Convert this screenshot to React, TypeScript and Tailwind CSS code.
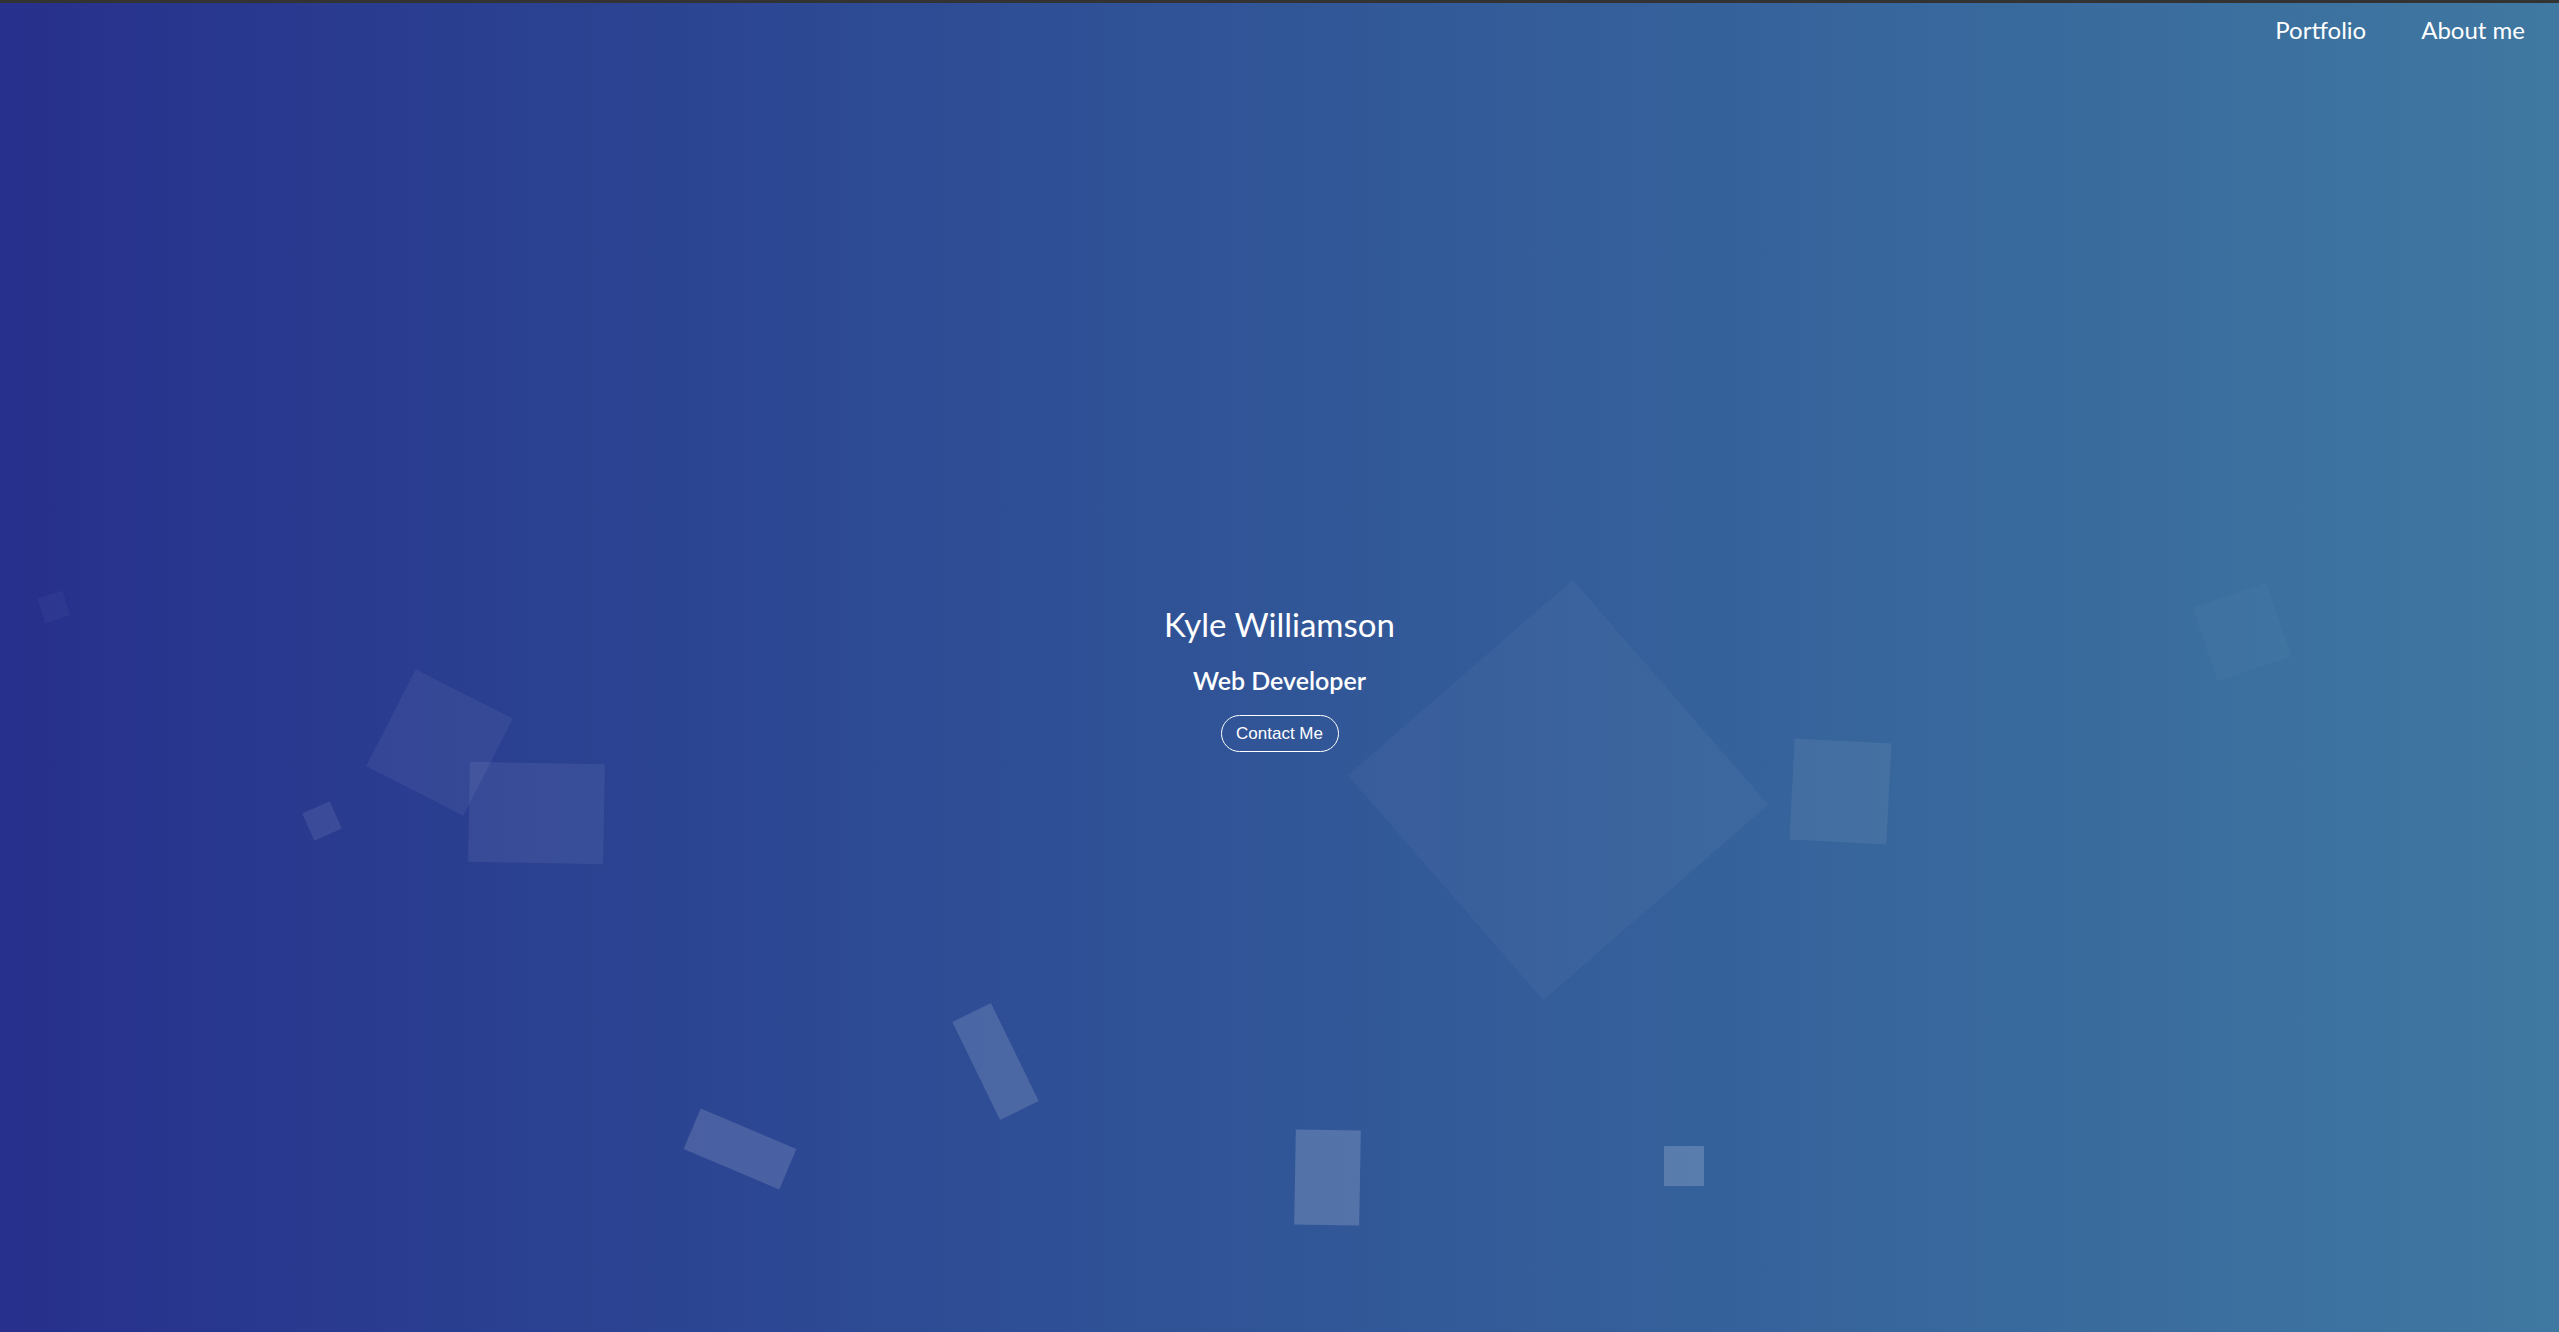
import React from "react";

type Shape = {
  x: number;
  y: number;
  w: number;
  h: number;
  rot: number;
  op: number;
};

// centre, size, rotation and opacity of the floating squares
const shapes: Shape[] = [
  { x: 1558, y: 790, w: 298, h: 298, rot: -41, op: 0.035 },
  { x: 439, y: 742, w: 109, h: 109, rot: 27, op: 0.055 },
  { x: 536, y: 813, w: 135, h: 100, rot: 1, op: 0.065 },
  { x: 322, y: 821, w: 30, h: 30, rot: -24, op: 0.09 },
  { x: 54, y: 607, w: 26, h: 26, rot: -18, op: 0.03 },
  { x: 1840, y: 791, w: 97, h: 101, rot: 3, op: 0.065 },
  { x: 2242, y: 632, w: 78, h: 78, rot: -19, op: 0.025 },
  { x: 740, y: 1149, w: 104, h: 44, rot: 23, op: 0.14 },
  { x: 995, y: 1061, w: 43, h: 109, rot: -26, op: 0.14 },
  { x: 1327, y: 1177, w: 65, h: 95, rot: 1, op: 0.17 },
  { x: 1684, y: 1166, w: 40, h: 40, rot: 0, op: 0.18 },
];

export default function App() {
  return (
    <div className="relative flex h-screen w-full flex-col overflow-hidden border-t-[3px] border-[#333333] bg-gradient-to-r from-[#27308c] to-[#3f78a1] font-['Lato',sans-serif] text-white">
      {shapes.map((s, i) => (
        <div
          key={i}
          className="pointer-events-none absolute bg-white"
          style={{
            left: s.x - s.w / 2,
            top: s.y - 3 - s.h / 2,
            width: s.w,
            height: s.h,
            opacity: s.op,
            transform: `rotate(${s.rot}deg)`,
          }}
        />
      ))}

      <header className="relative z-10 flex justify-end gap-[55px] px-[34px] pt-[9px]">
        <a href="#portfolio" className="text-[24px]">
          Portfolio
        </a>
        <a href="#about" className="text-[24px]">
          About me
        </a>
      </header>

      <section className="relative z-10 flex flex-1 flex-col items-center pt-[554px]">
        <h1 className="text-[33px] leading-[44px]">Kyle Williamson</h1>
        <h2 className="mt-[18px] text-[25px] font-semibold leading-[32px]">Web Developer</h2>
        <button className="mt-[19px] h-[37px] w-[118px] rounded-full border border-white font-['Liberation_Sans',sans-serif] text-[17px]">
          Contact Me
        </button>
      </section>
    </div>
  );
}
